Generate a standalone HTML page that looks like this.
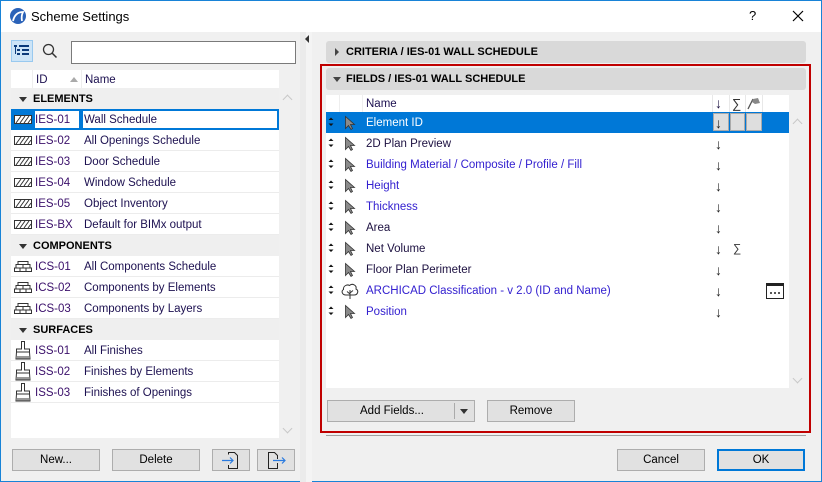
<!DOCTYPE html>
<html><head><meta charset="utf-8">
<style>
*{margin:0;padding:0;box-sizing:border-box}
body{width:822px;height:482px;overflow:hidden;background:#f0f0f0;font-family:"Liberation Sans",sans-serif;font-size:11.5px;color:#1c1040;position:relative}
.a{position:absolute}
.win{left:0;top:0;width:822px;height:482px;border:1px solid #1883d7}
.btn{position:absolute;height:22px;background:#e1e1e1;border:1px solid #adadad;text-align:center;line-height:21px;color:#000}
.lr{position:absolute;left:11px;width:268px;height:21px;border-bottom:1px solid #ececec;background:#fff;line-height:22px}
.gh{position:absolute;left:11px;width:268px;height:21px;background:#efefef;font-weight:bold;font-size:11px;line-height:22px;color:#000}
.gh i{position:absolute;left:8px;top:9px;border-left:4px solid transparent;border-right:4px solid transparent;border-top:5px solid #333}
.gh span{position:absolute;left:22px}
.lr .id{position:absolute;left:24px;color:#3a0f6a}
.lr .nm{position:absolute;left:73px;color:#1c1050}
.rr{position:absolute;left:326px;width:463px;height:21px;line-height:23px}
.rr .t{position:absolute;left:40px}
.rr .ar{position:absolute;left:389px;top:0;font-size:14px;color:#222}
.blue{color:#3320d0}
.chev{position:absolute;width:7px;height:7px;border-left:1.5px solid #c8c8c8;border-top:1.5px solid #c8c8c8}
</style></head><body>
<div class="a win"></div>
<div class="a" style="left:1px;top:1px;width:820px;height:31px;background:#fff"></div>
<svg class="a" style="left:9px;top:7px" width="18" height="18" viewBox="0 0 18 18"><circle cx="9" cy="9" r="8" fill="#2a62b8"/><path d="M4 14 Q6 5 14 5 Q12 9 13 14" fill="none" stroke="#fff" stroke-width="1.8"/></svg>
<div class="a" style="left:31px;top:9px;font-size:13px;color:#000">Scheme Settings</div>
<div class="a" style="left:749px;top:8px;font-size:13px;color:#000">?</div>
<svg class="a" style="left:792px;top:10px" width="12" height="12"><path d="M1 1L11 11M11 1L1 11" stroke="#000" stroke-width="1.2"/></svg>

<div class="a" style="left:11px;top:40px;width:22px;height:22px;background:#cce4f7;border:1px solid #99c9ef"></div>
<svg class="a" style="left:14px;top:44px" width="16" height="14"><g fill="#0b3a7a"><rect x="0" y="1" width="3" height="2"/><rect x="5" y="1" width="10" height="2"/><rect x="3" y="5" width="3" height="2"/><rect x="8" y="5" width="7" height="2"/><rect x="3" y="9" width="3" height="2"/><rect x="8" y="9" width="7" height="2"/><rect x="1" y="3" width="1" height="7"/></g></svg>
<svg class="a" style="left:42px;top:43px" width="16" height="16"><circle cx="6.5" cy="6.5" r="5" fill="none" stroke="#333" stroke-width="1.3"/><path d="M10 10L14.5 14.5" stroke="#333" stroke-width="1.5"/></svg>
<div class="a" style="left:71px;top:41px;width:225px;height:23px;background:#fff;border:1px solid #7a7a7a"></div>

<div class="a" style="left:11px;top:70px;width:268px;height:368px;background:#fff"></div>
<div class="a" style="left:11px;top:70px;width:268px;height:18px;background:#fff"></div>
<div class="a" style="left:32px;top:70px;width:1px;height:18px;background:#eee"></div>
<div class="a" style="left:81px;top:70px;width:1px;height:18px;background:#eee"></div>
<div class="a" style="left:36px;top:74px;color:#1c1050">ID</div>
<div class="a" style="left:70px;top:77px;border-left:4px solid transparent;border-right:4px solid transparent;border-bottom:5px solid #aaa"></div>
<div class="a" style="left:85px;top:74px;color:#1c1050">Name</div>
<div class="chev" style="left:284px;top:96px;transform:rotate(45deg)"></div>
<div class="chev" style="left:284px;top:425px;transform:rotate(225deg)"></div>

<div class="gh" style="top:88px"><i></i><span>ELEMENTS</span></div>
<div class="lr" style="top:109px;background:#fff;border:none">
 <div class="a" style="left:0;top:0;width:22px;height:21px;background:#0078d7"></div>
 <div class="a" style="left:22px;top:0;width:48px;height:21px;border:2px solid #0078d7"></div>
 <div class="a" style="left:70px;top:0;width:198px;height:21px;border:2px solid #0078d7"></div>
 <svg class="a" style="left:3px;top:6px" width="18" height="9"><rect x=".5" y=".5" width="17" height="8" fill="#fff" stroke="#333"/><path d="M2 8L7 1M6 8L11 1M10 8L15 1M14 8L17 4" stroke="#333"/></svg>
 <span class="id">IES-01</span><span class="nm">Wall Schedule</span></div>
<div class="lr" style="top:130px"><svg class="a" style="left:3px;top:6px" width="18" height="9"><rect x=".5" y=".5" width="17" height="8" fill="#fff" stroke="#333"/><path d="M2 8L7 1M6 8L11 1M10 8L15 1M14 8L17 4" stroke="#333"/></svg><span class="id">IES-02</span><span class="nm">All Openings Schedule</span></div>
<div class="lr" style="top:151px"><svg class="a" style="left:3px;top:6px" width="18" height="9"><rect x=".5" y=".5" width="17" height="8" fill="#fff" stroke="#333"/><path d="M2 8L7 1M6 8L11 1M10 8L15 1M14 8L17 4" stroke="#333"/></svg><span class="id">IES-03</span><span class="nm">Door Schedule</span></div>
<div class="lr" style="top:172px"><svg class="a" style="left:3px;top:6px" width="18" height="9"><rect x=".5" y=".5" width="17" height="8" fill="#fff" stroke="#333"/><path d="M2 8L7 1M6 8L11 1M10 8L15 1M14 8L17 4" stroke="#333"/></svg><span class="id">IES-04</span><span class="nm">Window Schedule</span></div>
<div class="lr" style="top:193px"><svg class="a" style="left:3px;top:6px" width="18" height="9"><rect x=".5" y=".5" width="17" height="8" fill="#fff" stroke="#333"/><path d="M2 8L7 1M6 8L11 1M10 8L15 1M14 8L17 4" stroke="#333"/></svg><span class="id">IES-05</span><span class="nm">Object Inventory</span></div>
<div class="lr" style="top:214px"><svg class="a" style="left:3px;top:6px" width="18" height="9"><rect x=".5" y=".5" width="17" height="8" fill="#fff" stroke="#333"/><path d="M2 8L7 1M6 8L11 1M10 8L15 1M14 8L17 4" stroke="#333"/></svg><span class="id">IES-BX</span><span class="nm">Default for BIMx output</span></div>
<div class="gh" style="top:235px"><i></i><span>COMPONENTS</span></div>
<div class="lr" style="top:256px"><svg class="a" style="left:3px;top:5px" width="18" height="11"><path d="M.5 10.5H17.5V7H.5ZM2 7V3.5H16V7M4 3.5V.5H14V3.5M6 7V10.5M12 7V10.5M9 3.5V7" fill="none" stroke="#333"/></svg><span class="id">ICS-01</span><span class="nm">All Components Schedule</span></div>
<div class="lr" style="top:277px"><svg class="a" style="left:3px;top:5px" width="18" height="11"><path d="M.5 10.5H17.5V7H.5ZM2 7V3.5H16V7M4 3.5V.5H14V3.5M6 7V10.5M12 7V10.5M9 3.5V7" fill="none" stroke="#333"/></svg><span class="id">ICS-02</span><span class="nm">Components by Elements</span></div>
<div class="lr" style="top:298px"><svg class="a" style="left:3px;top:5px" width="18" height="11"><path d="M.5 10.5H17.5V7H.5ZM2 7V3.5H16V7M4 3.5V.5H14V3.5M6 7V10.5M12 7V10.5M9 3.5V7" fill="none" stroke="#333"/></svg><span class="id">ICS-03</span><span class="nm">Components by Layers</span></div>
<div class="gh" style="top:319px"><i></i><span>SURFACES</span></div>
<div class="lr" style="top:340px"><svg class="a" style="left:4px;top:1px" width="16" height="19"><path d="M6.5 .5H9.5V8H14.5V11H1.5V8H6.5ZM1.5 11L1 18H15L14.5 11M3 18V15M5 18V15M7 18V15M9 18V15M11 18V15M13 18V15" fill="none" stroke="#333"/></svg><span class="id">ISS-01</span><span class="nm">All Finishes</span></div>
<div class="lr" style="top:361px"><svg class="a" style="left:4px;top:1px" width="16" height="19"><path d="M6.5 .5H9.5V8H14.5V11H1.5V8H6.5ZM1.5 11L1 18H15L14.5 11M3 18V15M5 18V15M7 18V15M9 18V15M11 18V15M13 18V15" fill="none" stroke="#333"/></svg><span class="id">ISS-02</span><span class="nm">Finishes by Elements</span></div>
<div class="lr" style="top:382px"><svg class="a" style="left:4px;top:1px" width="16" height="19"><path d="M6.5 .5H9.5V8H14.5V11H1.5V8H6.5ZM1.5 11L1 18H15L14.5 11M3 18V15M5 18V15M7 18V15M9 18V15M11 18V15M13 18V15" fill="none" stroke="#333"/></svg><span class="id">ISS-03</span><span class="nm">Finishes of Openings</span></div>

<div class="btn" style="left:12px;top:449px;width:88px">New...</div>
<div class="btn" style="left:112px;top:449px;width:88px">Delete</div>
<div class="btn" style="left:212px;top:449px;width:38px"><svg style="margin-top:2px" width="20" height="17"><path d="M7.5 2.5V.5H13.5L16.5 3.5V16.5H7.5V13" fill="none" stroke="#222"/><path d="M1 8.5H12M9 5.5L12 8.5L9 11.5" fill="none" stroke="#2a7be0" stroke-width="1.2"/></svg></div>
<div class="btn" style="left:257px;top:449px;width:38px"><svg style="margin-top:2px" width="22" height="17"><path d="M12.5 7V3.5L9.5 .5H3.5V16.5H12.5V11" fill="none" stroke="#222"/><path d="M8 8.5H20M17 5.5L20 8.5L17 11.5" fill="none" stroke="#2a7be0" stroke-width="1.2"/></svg></div>

<div class="a" style="left:300px;top:32px;width:6px;height:450px;background:#ebebeb"></div>
<div class="a" style="left:306px;top:32px;width:6px;height:450px;background:#f4f4f4"></div>
<div class="a" style="left:305px;top:35px;border-top:4px solid transparent;border-bottom:4px solid transparent;border-right:4px solid #333"></div>

<div class="a" style="left:326px;top:41px;width:480px;height:22px;background:#d9d9d9;border-radius:3px"></div>
<div class="a" style="left:335px;top:48px;border-top:4px solid transparent;border-bottom:4px solid transparent;border-left:4px solid #444"></div>
<div class="a" style="left:346px;top:46px;font-weight:bold;font-size:11px;color:#000">CRITERIA / IES-01 WALL SCHEDULE</div>
<div class="a" style="left:320px;top:64px;width:491px;height:369px;border:2px solid #c00000"></div>
<div class="a" style="left:326px;top:68px;width:480px;height:22px;background:#d9d9d9;border-radius:3px"></div>
<div class="a" style="left:333px;top:77px;border-left:4px solid transparent;border-right:4px solid transparent;border-top:5px solid #444"></div>
<div class="a" style="left:346px;top:73px;font-weight:bold;font-size:11px;color:#000">FIELDS / IES-01 WALL SCHEDULE</div>

<div class="a" style="left:326px;top:95px;width:463px;height:293px;background:#fff"></div>
<div class="a" style="left:339px;top:95px;width:1px;height:17px;background:#eee"></div>
<div class="a" style="left:362px;top:95px;width:1px;height:17px;background:#eee"></div>
<div class="a" style="left:712px;top:95px;width:1px;height:17px;background:#e8e8e8"></div>
<div class="a" style="left:729px;top:95px;width:1px;height:17px;background:#e8e8e8"></div>
<div class="a" style="left:745px;top:95px;width:1px;height:17px;background:#e8e8e8"></div>
<div class="a" style="left:762px;top:95px;width:1px;height:17px;background:#e8e8e8"></div>
<div class="a" style="left:366px;top:98px;color:#1c1050">Name</div>
<div class="a" style="left:715px;top:95px;font-size:14px">↓</div>
<div class="a" style="left:732px;top:96px;font-size:13px;color:#333">∑</div>
<svg class="a" style="left:747px;top:97px" width="14" height="13"><path d="M1 12L6 2" stroke="#555" stroke-width="1.3"/><path d="M6 2L11 1L13 6L8 7L5 5Z" fill="#888"/></svg>
<div class="chev" style="left:794px;top:120px;transform:rotate(45deg)"></div>
<div class="chev" style="left:794px;top:375px;transform:rotate(225deg)"></div>

<div class="a" style="left:326px;top:112px;width:463px;height:21px;background:#0078d7"></div>
<div class="a" style="left:713px;top:113px;width:16px;height:18px;background:#dedede;border:1px solid #aaa"></div>
<div class="a" style="left:730px;top:113px;width:15px;height:18px;background:#dedede;border:1px solid #aaa"></div>
<div class="a" style="left:746px;top:113px;width:16px;height:18px;background:#dedede;border:1px solid #aaa"></div>

<div class="rr" style="top:112px;color:#fff"><span class="t">Element ID</span><span class="ar" style="color:#222">↓</span></div>
<div class="rr" style="top:133px"><span class="t">2D Plan Preview</span><span class="ar">↓</span></div>
<div class="rr blue" style="top:154px"><span class="t">Building Material / Composite / Profile / Fill</span><span class="ar">↓</span></div>
<div class="rr blue" style="top:175px"><span class="t">Height</span><span class="ar">↓</span></div>
<div class="rr blue" style="top:196px"><span class="t">Thickness</span><span class="ar">↓</span></div>
<div class="rr" style="top:217px"><span class="t">Area</span><span class="ar">↓</span></div>
<div class="rr" style="top:238px"><span class="t">Net Volume</span><span class="ar">↓</span><span class="a" style="left:407px;color:#333">∑</span></div>
<div class="rr" style="top:259px"><span class="t">Floor Plan Perimeter</span><span class="ar">↓</span></div>
<div class="rr blue" style="top:280px"><span class="t">ARCHICAD Classification - v 2.0 (ID and Name)</span><span class="ar">↓</span></div>
<div class="rr blue" style="top:301px"><span class="t">Position</span><span class="ar">↓</span></div>

<svg class="a" style="left:326px;top:112px" width="30" height="210">
 <g id="r"><path d="M5 5.5L7.5 8H2.5ZM5 14L7.5 11.5H2.5Z" fill="#111"/></g>
 <use href="#r" y="21"/><use href="#r" y="42"/><use href="#r" y="63"/><use href="#r" y="84"/><use href="#r" y="105"/><use href="#r" y="126"/><use href="#r" y="147"/><use href="#r" y="168"/><use href="#r" y="189"/>
</svg>
<svg class="a" style="left:343px;top:115px" width="14" height="210">
 <g id="c"><path d="M2.5 1.5V13.5L5.5 10.5L8 14.5L9.5 13.5L7.5 9.5H11.5Z" fill="#8a8a8a" stroke="#333" stroke-width=".8"/></g>
 <use href="#c" y="21"/><use href="#c" y="42"/><use href="#c" y="63"/><use href="#c" y="84"/><use href="#c" y="105"/><use href="#c" y="126"/><use href="#c" y="147"/><use href="#c" y="189"/>
</svg>
<svg class="a" style="left:340px;top:282px" width="20" height="18"><path d="M6 13C2 13 1 9 3.5 7.5C3 4 7 2 9.5 3.5C12 1 17 3 16 7C19 8.5 18 13 14 13Z" fill="none" stroke="#333"/><path d="M10 17V8M10 12L7 9.5M10 11L13 8.5" stroke="#333" fill="none"/></svg>
<svg class="a" style="left:766px;top:283px" width="18" height="16"><rect x=".5" y=".5" width="17" height="15" fill="#fff" stroke="#222"/><rect x="0" y="0" width="18" height="3" fill="#222"/><path d="M4 10h2M8 10h2M12 10h2" stroke="#222" stroke-width="1.5"/></svg>

<div class="btn" style="left:327px;top:400px;width:148px"><span style="position:absolute;left:32px">Add Fields...</span><span style="position:absolute;left:126px;top:2px;width:1px;height:16px;background:#aaa"></span><span style="position:absolute;left:132px;top:8px;border-left:4px solid transparent;border-right:4px solid transparent;border-top:5px solid #333"></span></div>
<div class="btn" style="left:487px;top:400px;width:88px">Remove</div>

<div class="a" style="left:326px;top:435px;width:480px;height:1px;background:#a0a0a0"></div>
<div class="btn" style="left:617px;top:449px;width:88px">Cancel</div>
<div class="btn" style="left:717px;top:449px;width:88px;border:2px solid #0078d7;line-height:19px">OK</div>
</body></html>
